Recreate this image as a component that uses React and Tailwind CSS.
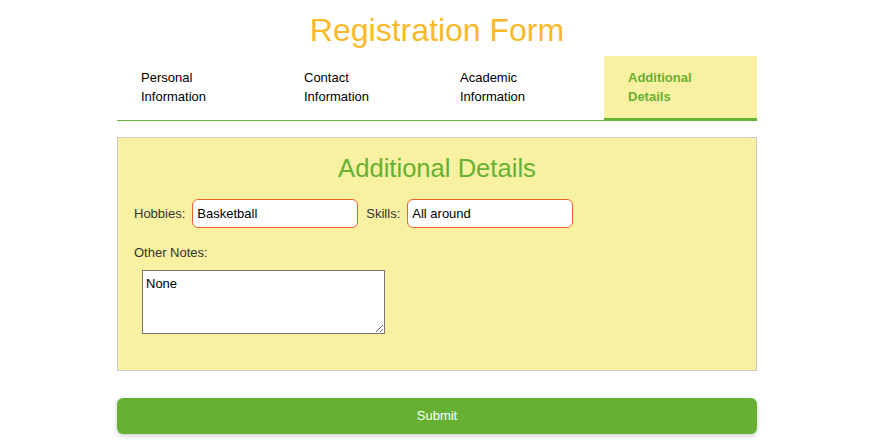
import React, { useState } from 'react';

const tabs = [
  { label: ['Personal', 'Information'], w: 'w-[163px]' },
  { label: ['Contact', 'Information'], w: 'w-[156px]' },
  { label: ['Academic', 'Information'], w: 'w-[168px]' },
  { label: ['Additional', 'Details'], w: 'w-[153px]', active: true },
];

export default function App() {
  const [hobbies, setHobbies] = useState('Basketball');
  const [skills, setSkills] = useState('All around');
  const [notes, setNotes] = useState('None');

  return <div className="min-h-[445px] bg-white pt-[12px] font-['Liberation_Sans',Arial,sans-serif]">
      <div className="ml-[117px] w-[640px]">
        <h1 className="mb-[7px] text-center text-[32px] leading-[37px] text-[#fbb829]">Registration Form</h1>

        {/* Tabs */}
        <div className="flex border-b border-[#66b132]">
          {tabs.map((t, i) => <div key={i} className={`${t.w} px-6 pt-[12px] text-[13px] leading-[19px] ${t.active ? '-mb-px border-b-[3px] border-[#66b132] bg-[#f8f1a1] pb-[11px] font-bold text-[#66b132]' : 'pb-[14px] text-black'}`}>
              {t.label[0]}<br />{t.label[1]}
            </div>)}
        </div>

        {/* Panel */}
        <div className="mt-[16px] h-[234px] border border-[#cccccc] bg-[#f8f1a1] px-4 pt-[15px]">
          <h2 className="text-center text-[25.6px] leading-[30px] text-[#66b132]">Additional Details</h2>
          <div className="mt-[16px] flex items-center text-[13px] text-[#333]">
            <label className="mr-[7px]">Hobbies:</label>
            <input value={hobbies} onChange={e => setHobbies(e.target.value)} className="h-[29px] w-[166px] rounded-[6px] border border-[#f0642a] bg-white px-1 text-[13px] text-black outline-none" />
            <label className="ml-[8px] mr-[7px]">Skills:</label>
            <input value={skills} onChange={e => setSkills(e.target.value)} className="h-[29px] w-[166px] rounded-[6px] border border-[#f0642a] bg-white px-1 text-[13px] text-black outline-none" />
          </div>
          <div className="mt-[17px] text-[13px] leading-[16px] text-[#333]">Other Notes:</div>
          <textarea value={notes} onChange={e => setNotes(e.target.value)} className="ml-2 mt-[9px] block h-[64px] w-[243px] border border-[#767676] bg-white px-[3px] py-[5px] text-[13px] leading-[16px] text-black outline-none" />
        </div>

        <button className="mt-[27px] h-[36px] w-full rounded-[6px] bg-[#66b132] text-[13px] text-white shadow-[0_2px_5px_rgba(0,0,0,0.2)]">
          Submit
        </button>
      </div>
    </div>;
}
